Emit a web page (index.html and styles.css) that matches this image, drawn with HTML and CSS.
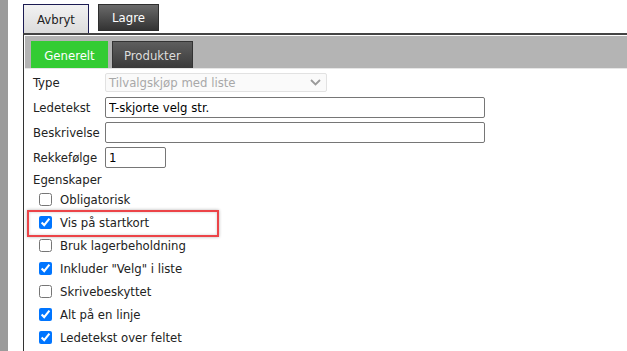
FILE: index.html
```html
<!DOCTYPE html>
<html lang="no">
<head>
    <meta charset="UTF-8">
    <meta name="viewport" content="width=device-width, initial-scale=1.0">
    <title>Tilvalg</title>
    <link rel="stylesheet" href="styles.css">
</head>
<body>
    <div class="sidebar"></div>
    <div class="main">
        <div class="toolbar">
            <button class="btn btn-cancel">Avbryt</button>
            <button class="btn btn-save">Lagre</button>
        </div>
        <div class="panel">
            <div class="tabs">
                <div class="tab tab-active">Generelt</div>
                <div class="tab">Produkter</div>
            </div>
            <div class="form">
                <div class="row">
                    <label class="label">Type</label>
                    <div class="select">
                        <span>Tilvalgskjøp med liste</span>
                        <svg width="11" height="7" viewBox="0 0 11 7"><path d="M1 1l4.5 4.5L10 1" fill="none" stroke="#9a9a9a" stroke-width="1.8"/></svg>
                    </div>
                </div>
                <div class="row">
                    <label class="label">Ledetekst</label>
                    <input class="input input-wide" type="text" value="T-skjorte velg str.">
                </div>
                <div class="row">
                    <label class="label">Beskrivelse</label>
                    <input class="input input-wide" type="text" value="">
                </div>
                <div class="row">
                    <label class="label">Rekkefølge</label>
                    <input class="input input-small" type="text" value="1">
                </div>
                <div class="section-title">Egenskaper</div>
                <label class="check"><input type="checkbox"> Obligatorisk</label>
                <label class="check check-marked"><input type="checkbox" checked> Vis på startkort</label>
                <label class="check"><input type="checkbox"> Bruk lagerbeholdning</label>
                <label class="check"><input type="checkbox" checked> Inkluder "Velg" i liste</label>
                <label class="check"><input type="checkbox"> Skrivebeskyttet</label>
                <label class="check"><input type="checkbox" checked> Alt på en linje</label>
                <label class="check"><input type="checkbox" checked> Ledetekst over feltet</label>
            </div>
        </div>
    </div>
</body>
</html>
```

FILE: styles.css
```css
body {
    margin: 0;
    display: flex;
    height: 100vh;
    font-family: "DejaVu Sans Condensed", "DejaVu Sans", sans-serif;
    font-size: 13px;
    color: #222;
    background: #fff;
    overflow: hidden;
}
.sidebar {
    width: 8px;
    background: #9b9b9b;
    flex-shrink: 0;
}
.main {
    flex: 1;
    display: flex;
    flex-direction: column;
    padding: 4px 0 0 15px;
}
.toolbar {
    display: flex;
    align-items: flex-start;
    gap: 9px;
    height: 29px;
}
.btn {
    font-family: inherit;
    font-size: 13px;
    padding: 0;
    cursor: pointer;
}
.btn-cancel {
    width: 66px;
    height: 29px;
    border: 1px solid #1c1c52;
    border-bottom: none;
    background: linear-gradient(#f2f2f2, #dcdcdc);
    color: #222;
}
.btn-save {
    width: 61px;
    height: 27px;
    border: 1px solid #2e2e2e;
    background: linear-gradient(#6a6a6a, #333);
    color: #fff;
}
.panel {
    flex: 1;
    border-top: 2px solid #444;
    border-left: 1px solid #333;
    padding: 1px 0 0 1px;
}
.tabs {
    display: flex;
    gap: 4px;
    background: #b4b4b4;
    padding: 5px 0 0 6px;
    height: 27px;
    border-bottom: 1px solid #e6e6e6;
}
.tab {
    height: 27px;
    box-sizing: border-box;
    padding: 0 11px;
    display: flex;
    align-items: center;
    font-size: 13px;
    color: #ddd;
    background: linear-gradient(#5e5e5e, #3a3a3a);
    border: 1px solid #333;
    border-bottom: none;
}
.tab-active {
    width: 77px;
    justify-content: center;
    background: #33cc33;
    border-color: #33cc33;
    color: #fff;
}
.form {
    padding: 1px 0 0 8px;
}
.row {
    display: flex;
    align-items: center;
    height: 25px;
}
.label {
    width: 72px;
    flex-shrink: 0;
}
.select {
    width: 222px;
    height: 19px;
    box-sizing: border-box;
    border: 1px solid #e2e2e2;
    border-radius: 2px;
    background: #fafafa;
    color: #a8a8a8;
    font-size: 13px;
    display: flex;
    align-items: center;
    justify-content: space-between;
    padding: 0 5px 0 3px;
}
.input {
    height: 21px;
    box-sizing: border-box;
    border: 1px solid #767676;
    border-radius: 2px;
    padding: 0 3px;
    font-family: inherit;
    font-size: 13px;
    color: #000;
}
.input-wide {
    width: 380px;
}
.input-small {
    width: 61px;
}
.section-title {
    height: 18px;
    display: flex;
    align-items: center;
}
.check {
    display: flex;
    align-items: center;
    height: 23px;
    gap: 8px;
    padding-left: 6px;
}
.check input {
    margin: 0;
    width: 13px;
    height: 13px;
}
.check-marked {
    position: relative;
}
.check-marked::after {
    content: "";
    position: absolute;
    left: -6px;
    top: -1px;
    width: 188px;
    bottom: -3px;
    border: 2px solid #ec4448;
    box-shadow: 0 0 3px rgba(0, 0, 0, 0.3), inset 0 0 3px rgba(0, 0, 0, 0.2);
}
```
